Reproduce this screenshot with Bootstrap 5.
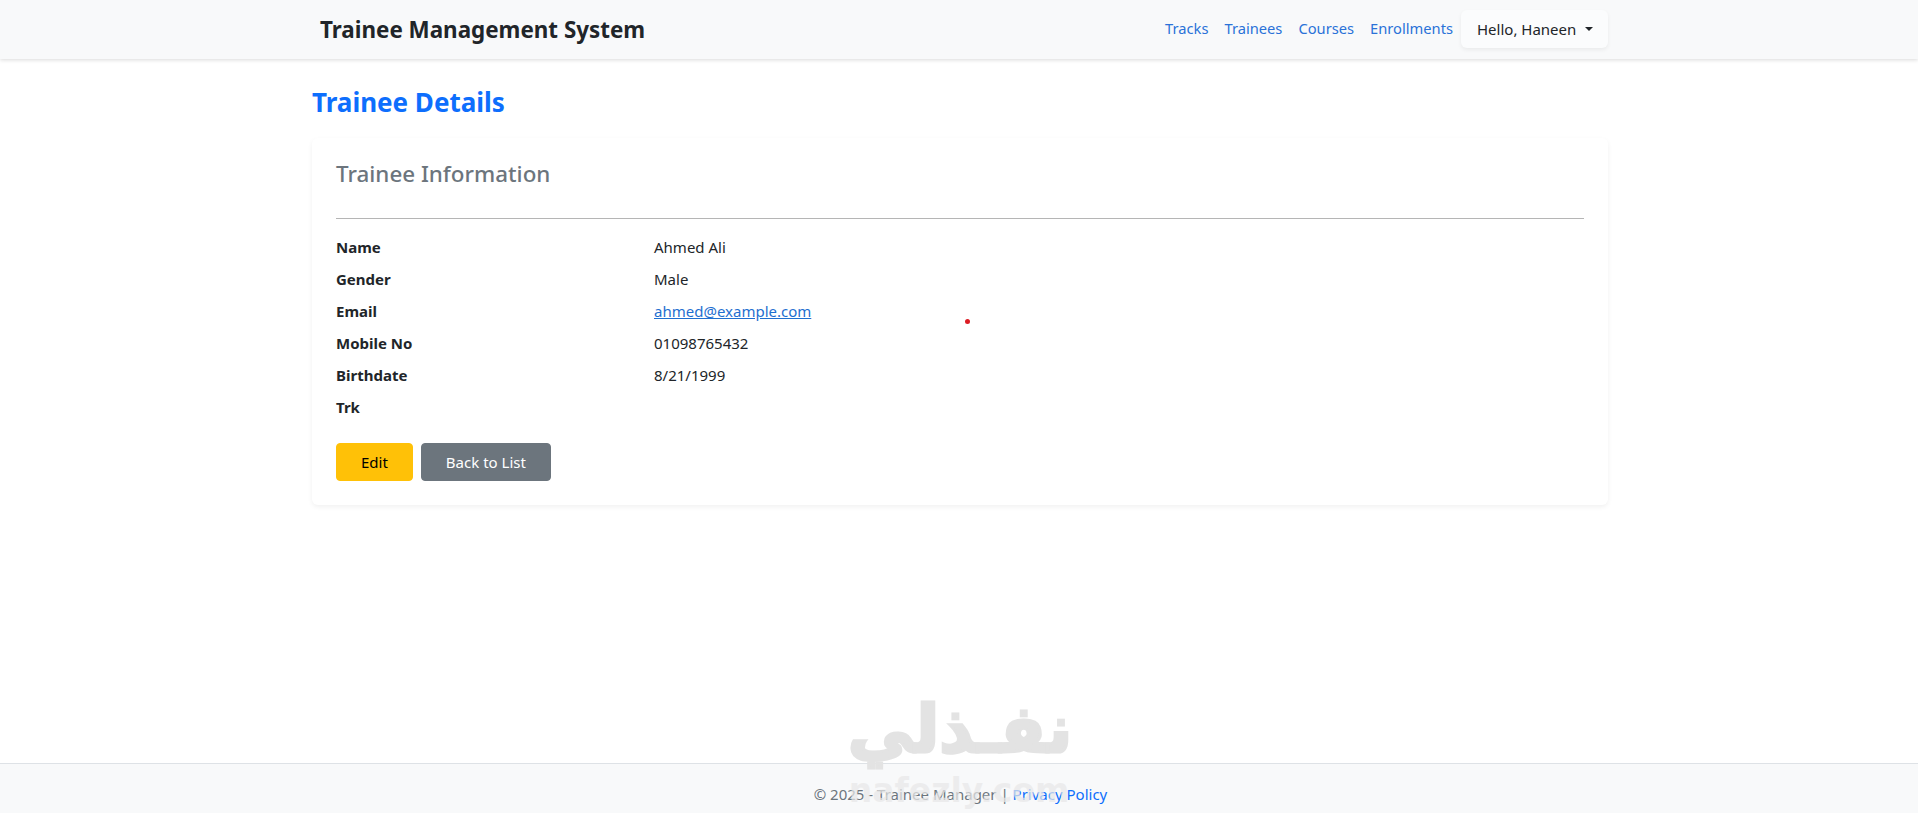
<!DOCTYPE html>
<html lang="en">
<head>
  <meta charset="UTF-8">
  <meta name="viewport" content="width=device-width, initial-scale=1.0">
  <title>Trainee Details</title>
  <link href="https://cdn.jsdelivr.net/npm/bootstrap@5.3.0/dist/css/bootstrap.min.css" rel="stylesheet">
  <style>
    html, body { height: 100%; }
    body { font-family: "Noto Sans", "Open Sans", sans-serif; display: flex; flex-direction: column; position: relative; overflow: hidden; }
    .container-xxl { margin-left: 300px; margin-right: 298px; }
    .top-bar { height: 59px; padding: 0; box-shadow: 0 1px 4px rgba(0,0,0,.15); }
    .top-bar .navbar-brand { font-size: 22.4px; font-weight: 700; margin-left: 8px; color: #212529; }
    .top-bar .nav-link { color: #2a72d8; font-size: 14.7px; padding: 7px 8px 9px; }
    .user-btn { background: #fbfcfd; border: 0; width: 147px; height: 38px; font-size: 15px; color: #212529; border-radius: 6px; box-shadow: 0 2px 4px rgba(0,0,0,.06); text-align: left; padding-left: 16px; }
    .user-btn::after { margin-left: 9px; }
    .page-title { font-size: 26px; font-weight: 700; color: #0d6efd; margin: 0; line-height: 38px; }
    .info-card { height: 367px; margin-top: 17px; border: 0; border-radius: 6px; box-shadow: 0 2px 5px rgba(0,0,0,.06); padding: 18px 24px 24px; }
    .info-title { font-size: 22.4px; font-weight: 500; color: #6c757d; line-height: 36px; margin: 0 0 26px; }
    .info-rule { margin: 0 0 16px; border-color: #b5b5b5; opacity: 1; }
    .info-list { margin-bottom: 16px; font-size: 15px; }
    .info-list dt, .info-list dd { margin-bottom: 8px; line-height: 24px; font-weight: 400; color: #212529; }
    .info-list dt { font-weight: 700; }
    .info-list a { color: #1f6fd0; }
    .act-btn { height: 38px; font-size: 15px; padding: 0 24px; line-height: 36px; border-radius: 4px; }
    .page-foot { height: 50px; border-top: 1px solid #dee2e6; background: #f8f9fa; color: #6c757d; font-size: 15px; padding: 12px 0 0 3px; }
    .page-foot a { color: #0d6efd; text-decoration: none; }
    .cursor-dot { position: absolute; left: 965px; top: 319px; width: 5px; height: 5px; border-radius: 50%; background: #dc1c24; }
    .wm { position: absolute; left: 0; right: 0; text-align: center; font-family: "DejaVu Sans", sans-serif; font-weight: 700; pointer-events: none; line-height: 1; }
    .wm-ar { top: 697px; font-size: 66px; padding-left: 2px; color: #e3e3e3; -webkit-text-stroke: 3px #e3e3e3; }
    .wm-en { top: 774px; font-size: 33px; color: rgba(232,232,232,.72); }
  </style>
</head>
<body>

<nav class="navbar navbar-expand-lg bg-light top-bar flex-shrink-0">
  <div class="container-xxl">
    <a class="navbar-brand" href="#">Trainee Management System</a>
    <div class="d-flex align-items-center ms-auto">
      <ul class="navbar-nav flex-row">
        <li class="nav-item"><a class="nav-link" href="#">Tracks</a></li>
        <li class="nav-item"><a class="nav-link" href="#">Trainees</a></li>
        <li class="nav-item"><a class="nav-link" href="#">Courses</a></li>
        <li class="nav-item"><a class="nav-link" href="#">Enrollments</a></li>
      </ul>
      <button class="btn user-btn dropdown-toggle" type="button">Hello, Haneen</button>
    </div>
  </div>
</nav>

<main class="container-xxl flex-grow-1 pt-3">
  <h2 class="page-title mt-2">Trainee Details</h2>

  <div class="card info-card">
    <h4 class="info-title">Trainee Information</h4>
    <hr class="info-rule">
    <dl class="row info-list">
      <dt class="col-sm-3">Name</dt>
      <dd class="col-sm-9">Ahmed Ali</dd>
      <dt class="col-sm-3">Gender</dt>
      <dd class="col-sm-9">Male</dd>
      <dt class="col-sm-3">Email</dt>
      <dd class="col-sm-9"><a href="#">ahmed@example.com</a></dd>
      <dt class="col-sm-3">Mobile No</dt>
      <dd class="col-sm-9">01098765432</dd>
      <dt class="col-sm-3">Birthdate</dt>
      <dd class="col-sm-9">8/21/1999</dd>
      <dt class="col-sm-3">Trk</dt>
      <dd class="col-sm-9"></dd>
    </dl>
    <div class="d-flex gap-2">
      <a href="#" class="btn btn-warning act-btn">Edit</a>
      <a href="#" class="btn btn-secondary act-btn">Back to List</a>
    </div>
  </div>
</main>

<footer class="page-foot d-flex align-items-center justify-content-center flex-shrink-0">
  <span>© 2025 - Trainee Manager | <a href="#">Privacy Policy</a></span>
</footer>

<div class="cursor-dot"></div>
<div class="wm wm-ar" dir="rtl" lang="ar">نفـذلي</div>
<div class="wm wm-en">nafezly.com</div>

<script src="https://cdn.jsdelivr.net/npm/bootstrap@5.3.0/dist/js/bootstrap.bundle.min.js"></script>
</body>
</html>
